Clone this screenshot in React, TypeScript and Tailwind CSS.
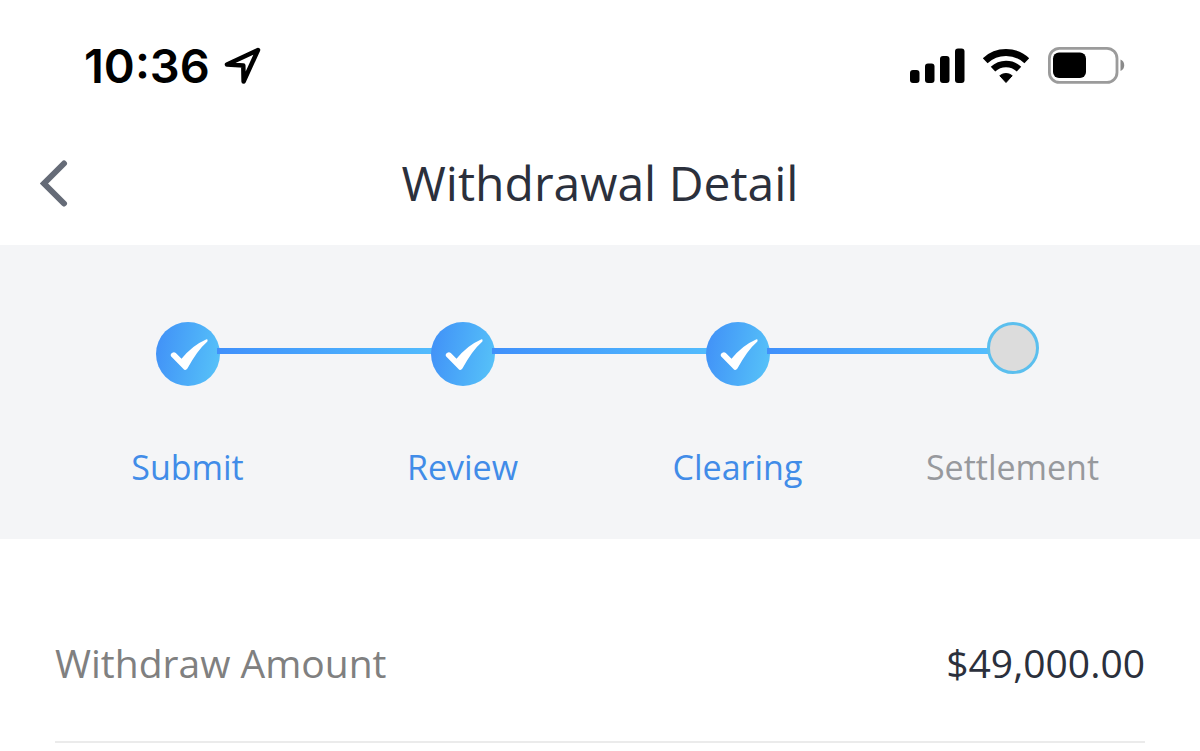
import { clsx } from "clsx";

type Step = { label: string; done: boolean };

const STEPS: Step[] = [
  { label: "Submit", done: true },
  { label: "Review", done: true },
  { label: "Clearing", done: true },
  { label: "Settlement", done: false },
];

const DETAILS = [{ label: "Withdraw Amount", value: "$49,000.00" }];

function LocationIcon() {
  return (
    <svg width="38" height="38" viewBox="0 0 38 38" fill="none" aria-hidden="true">
      <path
        d="M34 3 L3 17.5 L19.3 18.5 L19.6 34.5 Z"
        stroke="#000"
        strokeWidth="4.5"
        strokeLinejoin="round"
      />
    </svg>
  );
}

function SignalIcon() {
  return (
    <svg width="56" height="36" viewBox="0 0 56 36" aria-hidden="true">
      <rect x="0" y="22" width="9.5" height="13" rx="3" />
      <rect x="15" y="15.5" width="9.5" height="19.5" rx="3" />
      <rect x="30" y="8" width="9.5" height="27" rx="3" />
      <rect x="45" y="0.5" width="9.5" height="34.5" rx="3" />
    </svg>
  );
}

function WifiIcon() {
  return (
    <svg width="48" height="36" viewBox="0 0 48 36" fill="none" aria-hidden="true">
      <path d="M3.2 12.7 A30.5 30.5 0 0 1 44.8 12.7" stroke="#000" strokeWidth="7" />
      <path d="M11 21.1 A19 19 0 0 1 37 21.1" stroke="#000" strokeWidth="6.5" />
      <path
        d="M24 34.5 L17.8 27.7 A10 10 0 0 1 30.2 27.7 Z"
        fill="#000"
        stroke="#000"
        strokeLinejoin="round"
      />
    </svg>
  );
}

function BatteryIcon() {
  return (
    <svg width="80" height="38" viewBox="-2 0 80 38" fill="none" aria-hidden="true">
      <rect x="1.4" y="1.4" width="67.6" height="34" rx="10" stroke="#9b9b9b" strokeWidth="2.8" />
      <rect x="5" y="5.5" width="33" height="25.5" rx="6" fill="#000" />
      <path d="M72.5 12.5 C77.5 14.5 77.5 22 72.5 24 Z" fill="#8a8a8a" />
    </svg>
  );
}

function StatusBar() {
  return (
    <div className="flex items-center justify-between pt-[42px] pb-[27px] pl-[84px] pr-[74px]">
      <div className="flex items-center gap-3.5">
        <span className="font-[Inter,sans-serif] text-[47px] leading-[48px] font-semibold text-black">
          10:36
        </span>
        <LocationIcon />
      </div>
      <div className="flex items-center gap-4">
        <SignalIcon />
        <WifiIcon />
        <BatteryIcon />
      </div>
    </div>
  );
}

function NavBar() {
  return (
    <header className="grid grid-cols-[1fr_auto_1fr] items-center px-10 pt-[34px] pb-[30px]">
      <button type="button" aria-label="Back" className="justify-self-start">
        <svg width="30" height="52" viewBox="0 0 30 52" fill="none" aria-hidden="true">
          <path
            d="M24 6.5 L4 26.5 L24 46.5"
            stroke="#656b77"
            strokeWidth="6"
            strokeLinecap="round"
          />
        </svg>
      </button>
      <h1 className="text-5xl leading-[64px] text-[#2b303c]">Withdrawal Detail</h1>
    </header>
  );
}

function DoneMark() {
  return (
    <span className="relative flex size-16 rounded-full bg-linear-100 from-[#418ff7] to-[#58c4f8]">
      <svg width="64" height="64" viewBox="0 0 64 64" aria-hidden="true">
        <path
          d="M15.2 34.5 Q13.8 32.5 16 31 Q18 29.4 19.8 31 L25.5 36.8 Q36 23.5 50 17.4 Q52.4 17 51.4 19.4 Q41 28.5 31.4 46.5 Q29.4 49.4 27 46.4 Z"
          fill="#fff"
        />
      </svg>
    </span>
  );
}

function StepItem({ step, last }: { step: Step; last: boolean }) {
  return (
    <li className="relative flex flex-col items-center">
      <div className="flex h-16 items-start">
        {step.done ? (
          <DoneMark />
        ) : (
          <span className="relative size-[52px] rounded-full border-[3px] border-[#5bbfee] bg-[#dcdcdc]" />
        )}
      </div>
      {/* the far end slides under the next circle */}
      {!last && (
        <span className="absolute top-[26px] left-[calc(50%+29px)] h-1.5 w-[calc(100%-52px)] bg-linear-to-r from-[#4090fb] to-[#53bdfd]" />
      )}
      <span
        className={clsx(
          "mt-[57px] text-[34px] leading-[48px]",
          step.done ? "text-[#418ce8]" : "text-[#97999d]"
        )}
      >
        {step.label}
      </span>
    </li>
  );
}

export default function App() {
  return (
    <main className="min-h-screen bg-white font-['Open_Sans','Noto_Sans',sans-serif]">
      <StatusBar />
      <NavBar />
      <section className="bg-[#f4f5f7] px-[50px] pt-[77px] pb-12">
        <ol className="grid grid-cols-4">
          {STEPS.map((step, i) => (
            <StepItem key={step.label} step={step} last={i === STEPS.length - 1} />
          ))}
        </ol>
      </section>
      <dl className="px-[55px] pt-11">
        {DETAILS.map((row) => (
          <div
            key={row.label}
            className="flex items-center justify-between border-b-2 border-[#ebebeb] pt-[50px] pb-12 text-[39px] leading-[60px]"
          >
            <dt className="text-[#808080]">{row.label}</dt>
            <dd className="text-[#2b303c]">{row.value}</dd>
          </div>
        ))}
      </dl>
    </main>
  );
}
